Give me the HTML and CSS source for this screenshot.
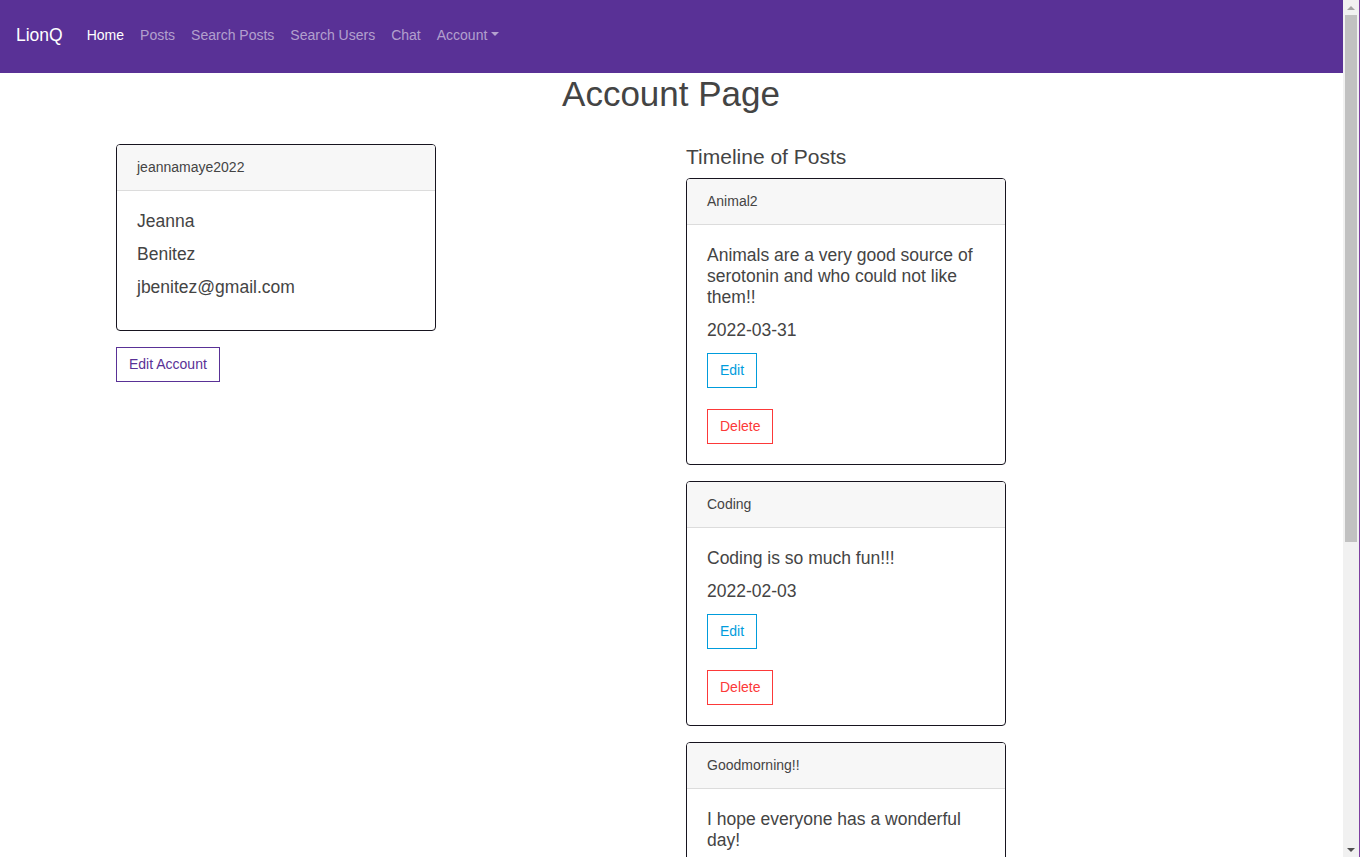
FILE: index.html
```html
<!DOCTYPE html>
<html lang="en">
<head>
<meta charset="utf-8">
<title>LionQ - Account</title>
<link rel="stylesheet" href="styles.css">
</head>
<body>
<div class="viewport">
  <nav class="navbar">
    <a class="brand" href="#">LionQ</a>
    <ul class="nav">
      <li><a class="nav-link active" href="#">Home</a></li>
      <li><a class="nav-link" href="#">Posts</a></li>
      <li><a class="nav-link" href="#">Search Posts</a></li>
      <li><a class="nav-link" href="#">Search Users</a></li>
      <li><a class="nav-link" href="#">Chat</a></li>
      <li><a class="nav-link dropdown-toggle" href="#">Account</a></li>
    </ul>
  </nav>

  <main class="container">
    <h1 class="page-title">Account Page</h1>
    <div class="spacer"></div>
    <div class="row">
      <section class="col">
        <div class="card">
          <div class="card-header">jeannamaye2022</div>
          <div class="card-body">
            <h5 class="card-title">Jeanna</h5>
            <h5 class="card-title">Benitez</h5>
            <h5 class="card-title">jbenitez@gmail.com</h5>
          </div>
        </div>
        <div class="account-actions">
          <button class="btn btn-primary">Edit Account</button>
        </div>
      </section>

      <section class="col">
        <h4 class="timeline-title">Timeline of Posts</h4>

        <div class="card post">
          <div class="card-header">Animal2</div>
          <div class="card-body">
            <h5 class="card-title">Animals are a very good source of serotonin and who could not like them!!</h5>
            <h5 class="card-title">2022-03-31</h5>
            <div class="post-actions">
              <button class="btn btn-info">Edit</button>
              <button class="btn btn-danger">Delete</button>
            </div>
          </div>
        </div>

        <div class="card post">
          <div class="card-header">Coding</div>
          <div class="card-body">
            <h5 class="card-title">Coding is so much fun!!!</h5>
            <h5 class="card-title">2022-02-03</h5>
            <div class="post-actions">
              <button class="btn btn-info">Edit</button>
              <button class="btn btn-danger">Delete</button>
            </div>
          </div>
        </div>

        <div class="card post">
          <div class="card-header">Goodmorning!!</div>
          <div class="card-body">
            <h5 class="card-title">I hope everyone has a wonderful day!</h5>
          </div>
        </div>
      </section>
    </div>
  </main>
</div>

<div class="scrollbar" aria-hidden="true">
  <div class="sb-arrow sb-up"></div>
  <div class="sb-track">
    <div class="sb-thumb"></div>
  </div>
  <div class="sb-arrow sb-down"></div>
</div>
<div class="frame-edge" aria-hidden="true"></div>
</body>
</html>
```

FILE: styles.css
```css
html, body {
  height: 100%;
  margin: 0;
  overflow: hidden;
}

body {
  display: flex;
  font-family: "Liberation Sans", Arial, Helvetica, sans-serif;
  font-size: 14px;
  line-height: 1.5;
  color: #444444;
  background: #ffffff;
}

*, *::before, *::after {
  box-sizing: border-box;
}

.viewport {
  flex: 1;
  min-width: 0;
  height: 100%;
  overflow: hidden;
}

/* Navbar */
.navbar {
  display: flex;
  align-items: center;
  height: 73px;
  padding: 0 16px 2px;
  background: #593196;
}

.brand {
  font-size: 17.5px;
  line-height: 26px;
  color: #ffffff;
  text-decoration: none;
  margin-right: 16px;
  margin-top: -1px;
}

.nav {
  display: flex;
  list-style: none;
  margin: 0;
  padding: 0;
}

.nav-link {
  display: block;
  padding: 8px 8px;
  font-size: 14px;
  line-height: 21px;
  color: rgba(255, 255, 255, 0.55);
  text-decoration: none;
}

.nav-link.active {
  color: #ffffff;
}

.dropdown-toggle::after {
  content: "";
  display: inline-block;
  margin-left: 3.6px;
  vertical-align: 3.6px;
  border-top: 4.2px solid;
  border-right: 4.2px solid transparent;
  border-left: 4.2px solid transparent;
  border-bottom: 0;
}

/* Layout */
.container {
  max-width: 1140px;
  margin: 0 auto;
  padding: 0 15.5px 0 14.5px;
}

.page-title {
  margin: 0 0 8px;
  font-size: 35px;
  line-height: 1.2;
  font-weight: 400;
  text-align: center;
}

.spacer {
  height: 21px;
}

.row {
  display: flex;
  margin: 0 -15px;
}

.col {
  flex: 0 0 50%;
  max-width: 50%;
  padding: 0 15px;
}

.timeline-title {
  margin: 0 0 9px;
  font-size: 21px;
  line-height: 1.2;
  font-weight: 400;
}

/* Cards */
.card {
  width: 320px;
  border: 1px solid #17141f;
  border-radius: 4px;
  background: #ffffff;
  overflow: hidden;
}

.card.post {
  margin-bottom: 16px;
}

.card-header {
  padding: 12px 20px;
  font-size: 14px;
  line-height: 21px;
  background: #f7f7f7;
  border-bottom: 1px solid #dcdcdc;
}

.card-body {
  padding: 20px;
}

.card-title {
  margin: 0 0 12px;
  font-size: 17.5px;
  line-height: 21px;
  font-weight: 400;
}

.account-actions {
  margin-top: 16px;
}

.post-actions {
  display: flex;
  flex-direction: column;
  align-items: flex-start;
  gap: 21px;
  margin-top: 12px;
}

/* Buttons */
.btn {
  display: inline-block;
  padding: 6px 12px;
  font-family: inherit;
  font-size: 14px;
  line-height: 21px;
  background: transparent;
  border: 1px solid;
  border-radius: 0;
  cursor: pointer;
}

.btn-primary {
  color: #593196;
  border-color: #593196;
}

.btn-info {
  color: #009cdc;
  border-color: #009cdc;
}

.btn-danger {
  color: #fc3939;
  border-color: #fc3939;
}

/* Fake window scrollbar */
.scrollbar {
  flex: 0 0 16px;
  display: flex;
  flex-direction: column;
  height: 100%;
  background: #f1f1f1;
}

.sb-arrow {
  flex: 0 0 15px;
  display: flex;
  align-items: center;
  justify-content: center;
}

.sb-up::before,
.sb-down::before {
  content: "";
  border-left: 4px solid transparent;
  border-right: 4px solid transparent;
}

.sb-up::before {
  border-bottom: 4px solid #a3a3a3;
}

.sb-down::before {
  border-top: 4px solid #505050;
}

.sb-track {
  flex: 1;
  padding: 0 2px;
}

.sb-thumb {
  height: 527px;
  background: #c1c1c1;
}

.frame-edge {
  flex: 0 0 1px;
  height: 100%;
  background: #7e3fa0;
}
```
